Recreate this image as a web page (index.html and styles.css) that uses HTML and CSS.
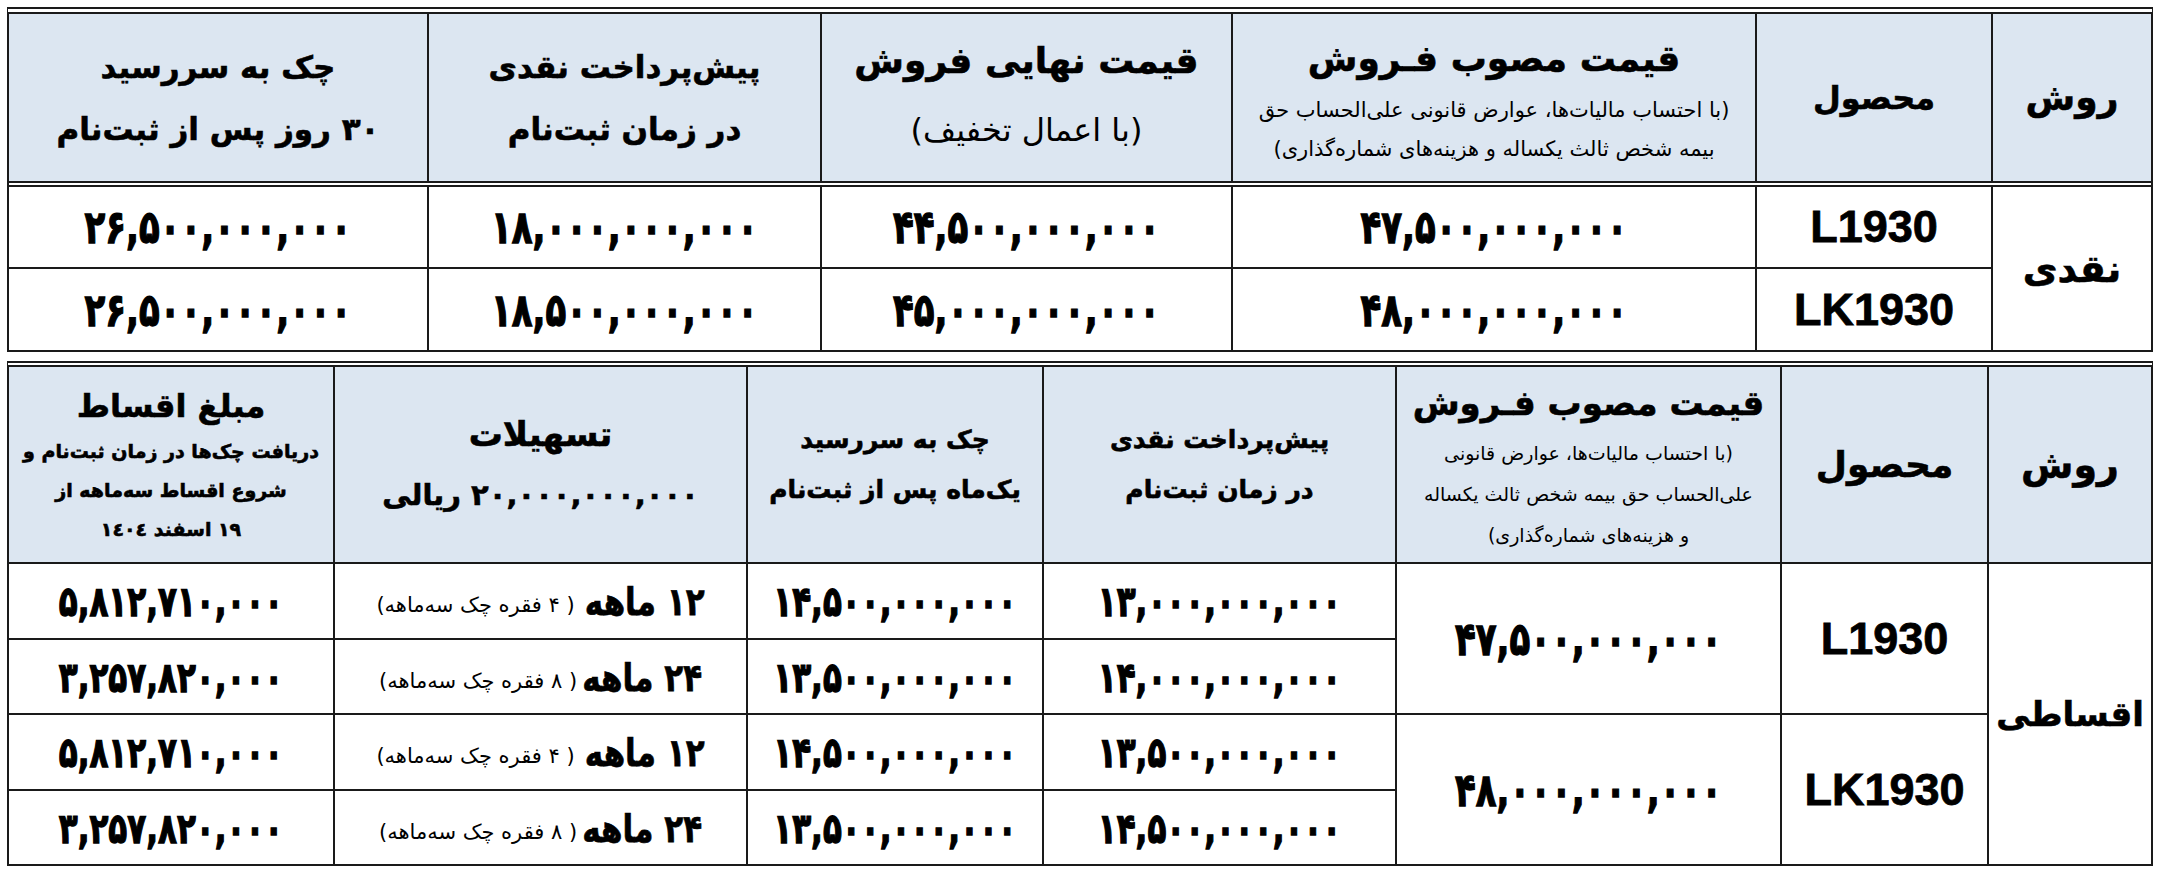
FILE: index.html
```html
<!DOCTYPE html>
<html lang="fa">
<head>
<meta charset="utf-8">
<title>جدول قیمت</title>
<link rel="stylesheet" href="styles.css">
</head>
<body>
<div class="sheet">
  <section class="tbl cash">
    <div class="grid cash-cols head-row">
      <div class="cell hd"><span class="t38">روش</span></div>
      <div class="cell hd"><span class="t34">محصول</span></div>
      <div class="cell hd">
        <span class="t44">قیمت مصوب فـروش</span>
        <span class="sub24">(با احتساب مالیات‌ها، عوارض قانونی علی‌الحساب حق</span>
        <span class="sub24">بیمه شخص ثالث یکساله و هزینه‌های شماره‌گذاری)</span>
      </div>
      <div class="cell hd">
        <span class="t44">قیمت نهایی فروش</span>
        <span class="t40r">(با اعمال تخفیف)</span>
      </div>
      <div class="cell hd">
        <span class="t36">پیش‌پرداخت نقدی</span>
        <span class="t36">در زمان ثبت‌نام</span>
      </div>
      <div class="cell hd">
        <span class="t36">چک به سررسید</span>
        <span class="t36">۳۰ روز پس از ثبت‌نام</span>
      </div>
    </div>
    <div class="grid cash-cols body-rows">
      <div class="cell span2"><span class="t40">نقدی</span></div>
      <div class="cell"><span class="model">L1930</span></div>
      <div class="cell"><span class="num">۴۷,۵۰۰,۰۰۰,۰۰۰</span></div>
      <div class="cell"><span class="num">۴۴,۵۰۰,۰۰۰,۰۰۰</span></div>
      <div class="cell"><span class="num">۱۸,۰۰۰,۰۰۰,۰۰۰</span></div>
      <div class="cell"><span class="num">۲۶,۵۰۰,۰۰۰,۰۰۰</span></div>
      <div class="cell"><span class="model">LK1930</span></div>
      <div class="cell"><span class="num">۴۸,۰۰۰,۰۰۰,۰۰۰</span></div>
      <div class="cell"><span class="num">۴۵,۰۰۰,۰۰۰,۰۰۰</span></div>
      <div class="cell"><span class="num">۱۸,۵۰۰,۰۰۰,۰۰۰</span></div>
      <div class="cell"><span class="num">۲۶,۵۰۰,۰۰۰,۰۰۰</span></div>
    </div>
  </section>

  <section class="tbl inst">
    <div class="grid inst-cols">
      <div class="cell hd"><span class="t40">روش</span></div>
      <div class="cell hd"><span class="t38">محصول</span></div>
      <div class="cell hd">
        <span class="t40s">قیمت مصوب فـروش</span>
        <span class="sub22">(با احتساب مالیات‌ها، عوارض قانونی</span>
        <span class="sub22">علی‌الحساب حق بیمه شخص ثالث یکساله</span>
        <span class="sub22">و هزینه‌های شماره‌گذاری)</span>
      </div>
      <div class="cell hd">
        <span class="t28">پیش‌پرداخت نقدی</span>
        <span class="t28">در زمان ثبت‌نام</span>
      </div>
      <div class="cell hd">
        <span class="t28">چک به سررسید</span>
        <span class="t28">یک‌ماه پس از ثبت‌نام</span>
      </div>
      <div class="cell hd">
        <span class="t40s">تسهیلات</span>
        <span class="t32">۲۰,۰۰۰,۰۰۰,۰۰۰ ریالی</span>
      </div>
      <div class="cell hd">
        <span class="t34">مبلغ اقساط</span>
        <span class="sub22b">دریافت  چک‌ها در زمان ثبت‌نام و</span>
        <span class="sub22b">شروع اقساط سه‌ماهه از</span>
        <span class="sub22b">۱۹ اسفند ١٤٠٤</span>
      </div>

      <div class="cell span4"><span class="t36m">اقساطی</span></div>
      <div class="cell span2"><span class="model">L1930</span></div>
      <div class="cell span2"><span class="num">۴۷,۵۰۰,۰۰۰,۰۰۰</span></div>
      <div class="cell"><span class="num sm">۱۳,۰۰۰,۰۰۰,۰۰۰</span></div>
      <div class="cell"><span class="num sm">۱۴,۵۰۰,۰۰۰,۰۰۰</span></div>
      <div class="cell"><span class="term"><b>۱۲ ماهه</b>&nbsp; <i>( ۴ فقره چک سه‌ماهه)</i></span></div>
      <div class="cell"><span class="num sm">۵,۸۱۲,۷۱۰,۰۰۰</span></div>

      <div class="cell"><span class="num sm">۱۴,۰۰۰,۰۰۰,۰۰۰</span></div>
      <div class="cell"><span class="num sm">۱۳,۵۰۰,۰۰۰,۰۰۰</span></div>
      <div class="cell"><span class="term"><b>۲۴ ماهه</b> <i>( ۸ فقره چک سه‌ماهه)</i></span></div>
      <div class="cell"><span class="num sm">۳,۲۵۷,۸۲۰,۰۰۰</span></div>

      <div class="cell span2"><span class="model">LK1930</span></div>
      <div class="cell span2"><span class="num">۴۸,۰۰۰,۰۰۰,۰۰۰</span></div>
      <div class="cell"><span class="num sm">۱۳,۵۰۰,۰۰۰,۰۰۰</span></div>
      <div class="cell"><span class="num sm">۱۴,۵۰۰,۰۰۰,۰۰۰</span></div>
      <div class="cell"><span class="term"><b>۱۲ ماهه</b>&nbsp; <i>( ۴ فقره چک سه‌ماهه)</i></span></div>
      <div class="cell"><span class="num sm">۵,۸۱۲,۷۱۰,۰۰۰</span></div>

      <div class="cell"><span class="num sm">۱۴,۵۰۰,۰۰۰,۰۰۰</span></div>
      <div class="cell"><span class="num sm">۱۳,۵۰۰,۰۰۰,۰۰۰</span></div>
      <div class="cell"><span class="term"><b>۲۴ ماهه</b> <i>( ۸ فقره چک سه‌ماهه)</i></span></div>
      <div class="cell"><span class="num sm">۳,۲۵۷,۸۲۰,۰۰۰</span></div>
    </div>
  </section>
</div>
</body>
</html>
```

FILE: styles.css
```css
html, body {
  margin: 0;
  padding: 0;
  background: #ffffff;
}
body {
  font-family: "DejaVu Sans", sans-serif;
  color: #000;
}
.sheet {
  padding: 7px 0 0 7px;
  width: 2146px;
}
.tbl {
  direction: rtl;
  width: 2146px;
  box-sizing: border-box;
  border-left: 2px solid #1a1a1a;
  border-right: 2px solid #1a1a1a;
  border-bottom: 2px solid #1a1a1a;
  background: #fff;
}
.cash {
  border-top: 7px double #1a1a1a;
}
.inst {
  margin-top: 9px;
  border-top: 6px double #1a1a1a;
}
.grid {
  display: grid;
  gap: 2px;
  background: #1a1a1a;
  background-clip: padding-box;
}
.cash-cols {
  grid-template-columns: 158px 234px 522px 409px 391px 418px;
}
.head-row {
  grid-template-rows: 167px;
}
.body-rows {
  grid-template-rows: 80px 81px;
  border-top: 6px double #1a1a1a;
}
.inst-cols {
  grid-template-columns: 162px 205px 383px 351px 294px 411px 324px;
  grid-template-rows: 195px 74px 73px 74px 73px;
}
.cell {
  background: #fff;
  display: flex;
  flex-direction: column;
  align-items: center;
  justify-content: center;
  text-align: center;
  white-space: nowrap;
  overflow: hidden;
}
.cell.hd {
  background: #dce6f1;
}
.span2 { grid-row: span 2; }
.span4 { grid-row: span 4; }

.t44, .t40, .t40s, .t38, .t36, .t36m, .t34, .t32, .t28, .sub22b, .num, .term b {
  -webkit-text-stroke: 0.6px #000;
}
.t44 { font-size: 36px; font-weight: 700; line-height: 64px; }
.t40 { font-size: 38px; font-weight: 700; line-height: 56px; }
.t40s { font-size: 34px; font-weight: 700; line-height: 60px; }
.t40r { font-size: 32px; font-weight: 400; line-height: 74px; }
.t38 { font-size: 36px; font-weight: 700; line-height: 52px; }
.t36 { font-size: 31px; font-weight: 700; line-height: 62px; }
.t36m { font-size: 34px; font-weight: 700; }
.t34 { font-size: 32px; font-weight: 700; line-height: 52px; }
.t32 { font-size: 29px; font-weight: 700; line-height: 62px; }
.t28 { font-size: 25px; font-weight: 700; line-height: 50px; }
.sub24 { font-size: 21px; font-weight: 400; line-height: 39px; }
.sub22 { font-size: 19px; font-weight: 400; line-height: 41px; }
.sub22b { font-size: 19px; font-weight: 700; line-height: 39px; }

.num {
  display: inline-block;
  font-size: 34px;
  font-weight: 700;
  letter-spacing: -1px;
  -webkit-text-stroke: 1px #000;
  transform: scaleY(1.35);
}
.num.sm {
  font-size: 31px;
}
.model {
  font-family: "Liberation Sans", Arial, sans-serif;
  font-size: 45px;
  font-weight: 700;
  -webkit-text-stroke: 0.8px #000;
}
.term b {
  display: inline-block;
  font-size: 31px;
  font-weight: 700;
  transform: scaleY(1.25);
}
.term i {
  font-style: normal;
  font-size: 21px;
  font-weight: 400;
}
```
